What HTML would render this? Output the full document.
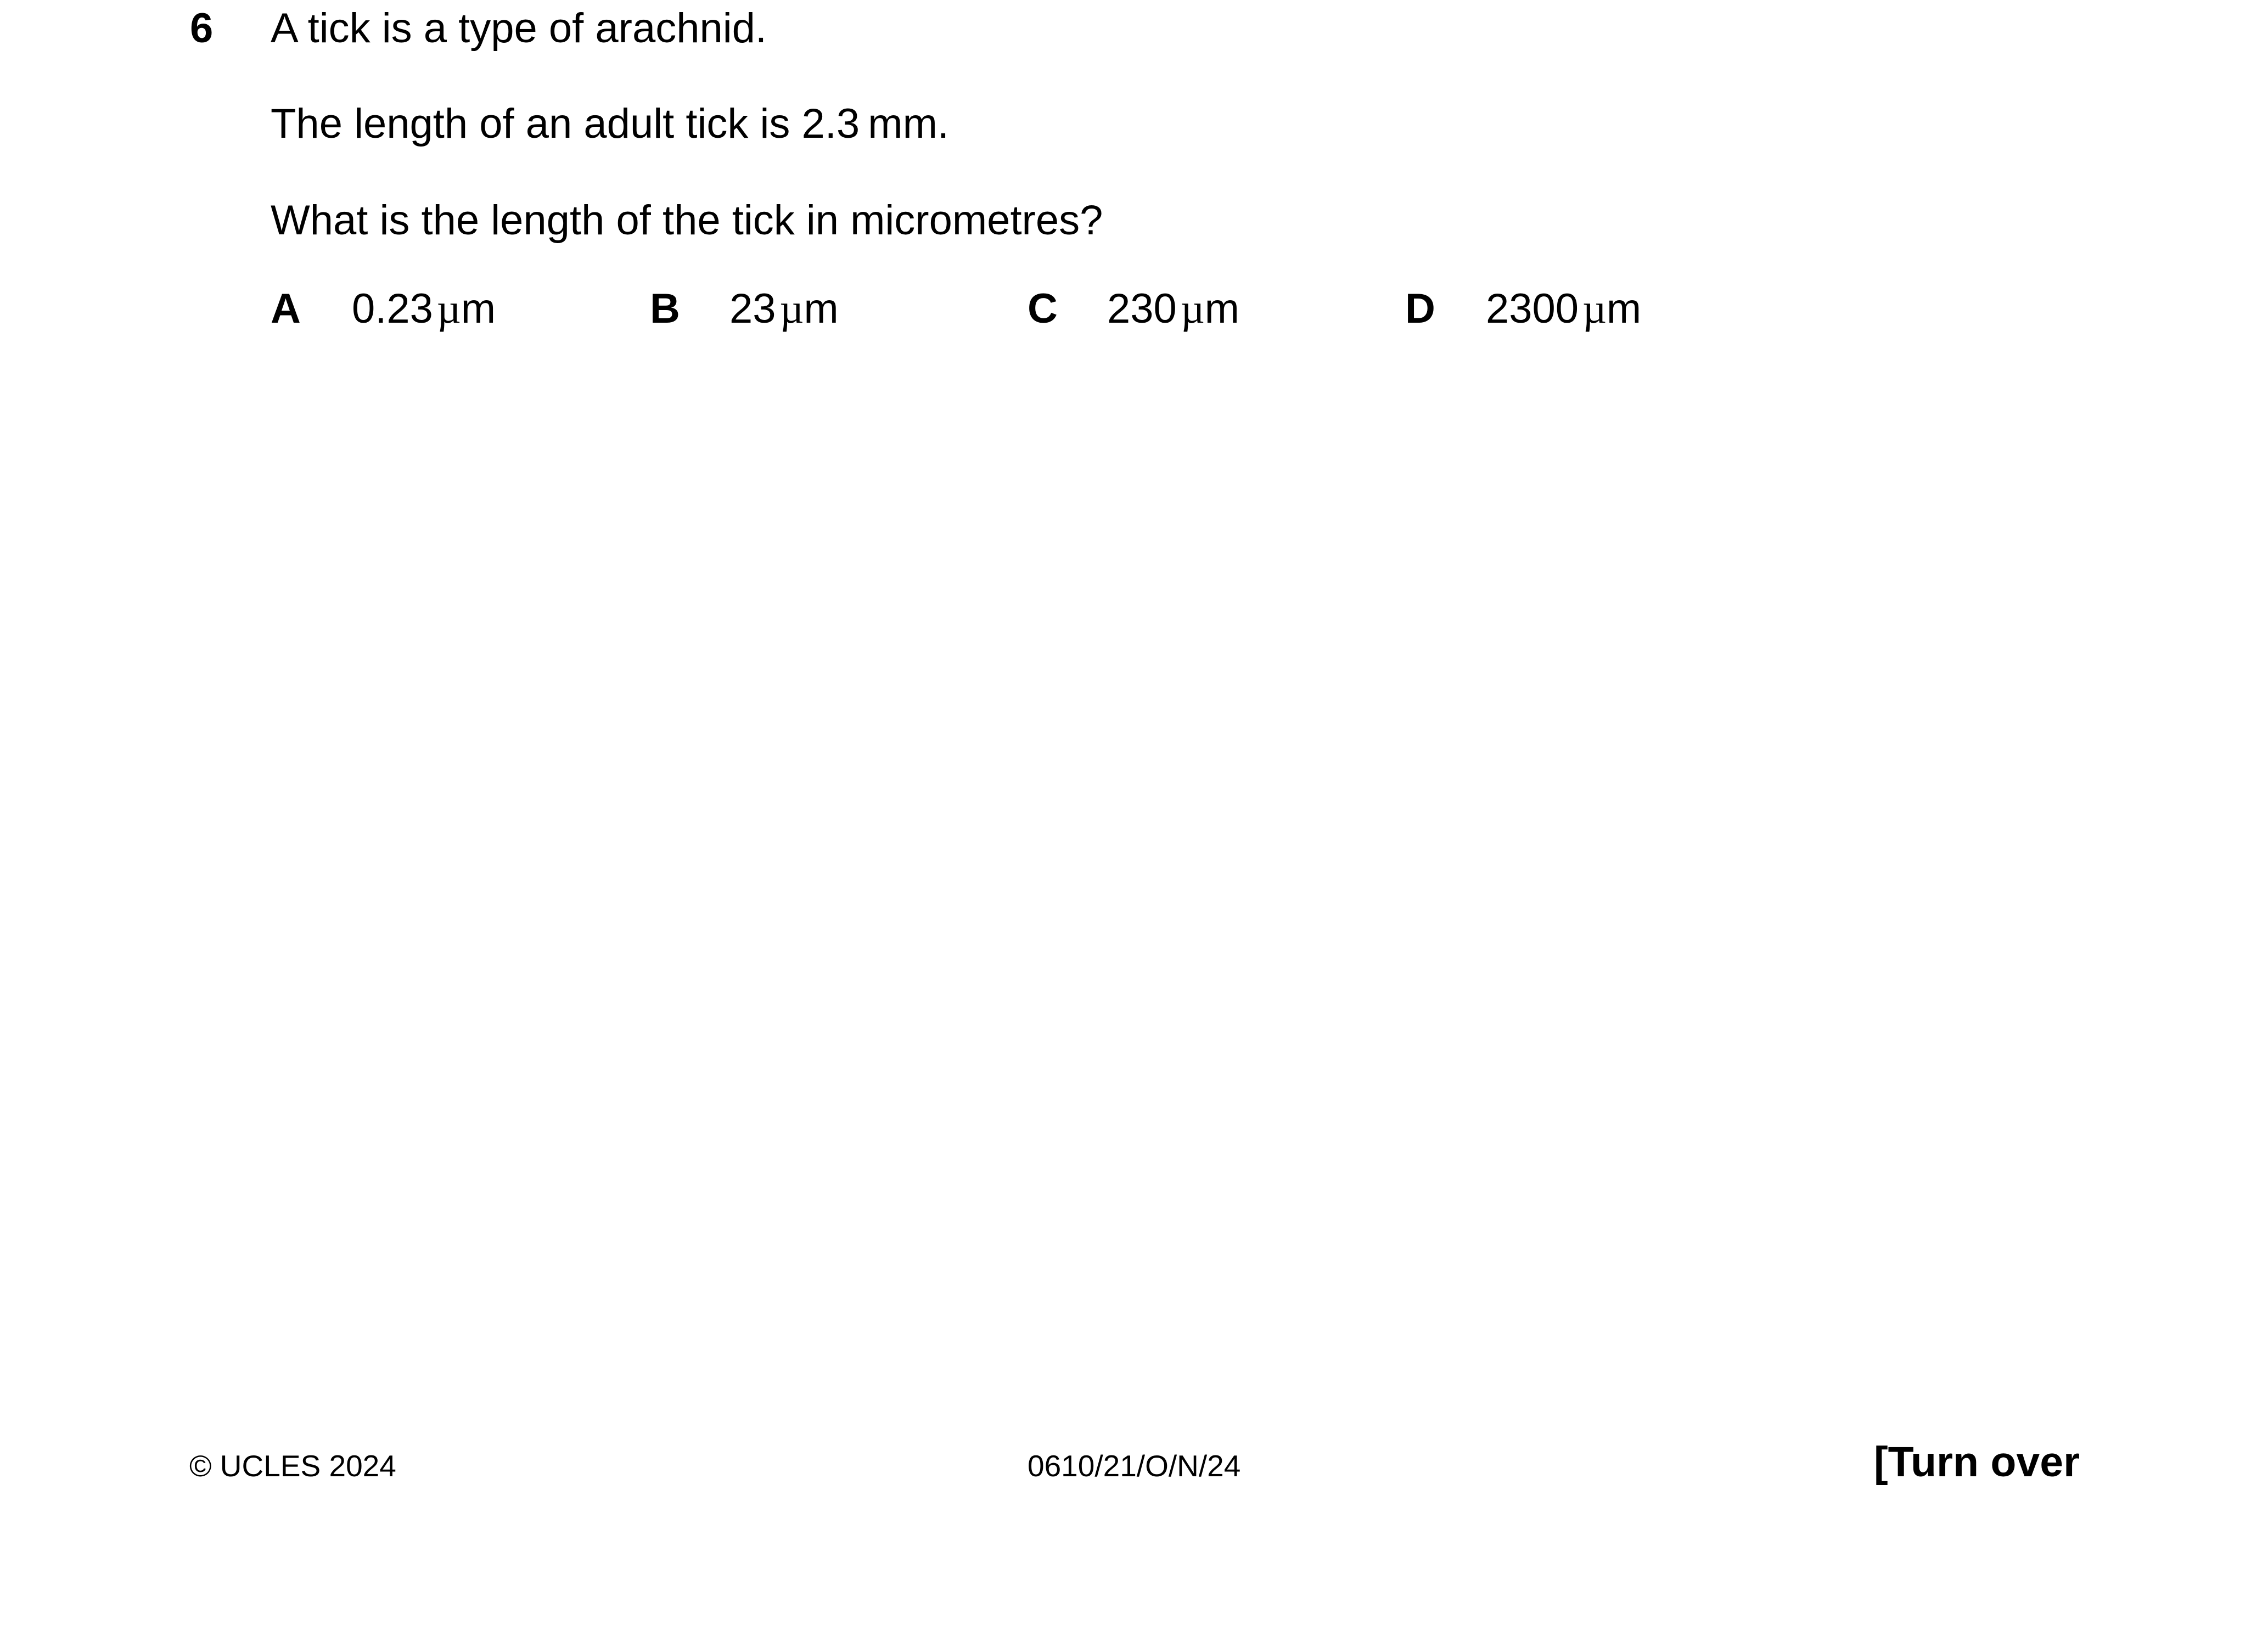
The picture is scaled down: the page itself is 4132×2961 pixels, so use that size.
<!DOCTYPE html>
<html><head><meta charset="utf-8"><style>
html,body{margin:0;padding:0;background:#fff;}
body{width:4132px;height:2961px;position:relative;overflow:hidden;font-family:"Liberation Sans",Arial,sans-serif;color:#000;}
.t{position:absolute;white-space:nowrap;line-height:1.117;}
.f70{font-size:76px;}
.b{font-weight:bold;}
.mu{font-family:"Liberation Serif",serif;margin-left:7px;}
</style></head><body>
<div class="t f70 b" style="left:346px;top:10px">6</div>
<div class="t f70" style="left:493px;top:10px">A tick is a type of arachnid.</div>
<div class="t f70" style="left:493px;top:184px">The length of an adult tick is 2.3&#8201;mm.</div>
<div class="t f70" style="left:493px;top:360px">What is the length of the tick in micrometres?</div>
<div class="t f70 b" style="left:493px;top:521px">A</div>
<div class="t f70" style="left:641px;top:521px">0.23<span class="mu">µ</span>m</div>
<div class="t f70 b" style="left:1184px;top:521px">B</div>
<div class="t f70" style="left:1329px;top:521px">23<span class="mu">µ</span>m</div>
<div class="t f70 b" style="left:1872px;top:521px">C</div>
<div class="t f70" style="left:2017px;top:521px">230<span class="mu">µ</span>m</div>
<div class="t f70 b" style="left:2560px;top:521px">D</div>
<div class="t f70" style="left:2707px;top:521px">2300<span class="mu">µ</span>m</div>
<div class="t" style="left:345px;top:2641px;font-size:55px">© UCLES 2024</div>
<div class="t" style="left:1872px;top:2641px;font-size:55px">0610/21/O/N/24</div>
<div class="t b" style="left:3414px;top:2621px;font-size:77px">[Turn over</div>
</body></html>
